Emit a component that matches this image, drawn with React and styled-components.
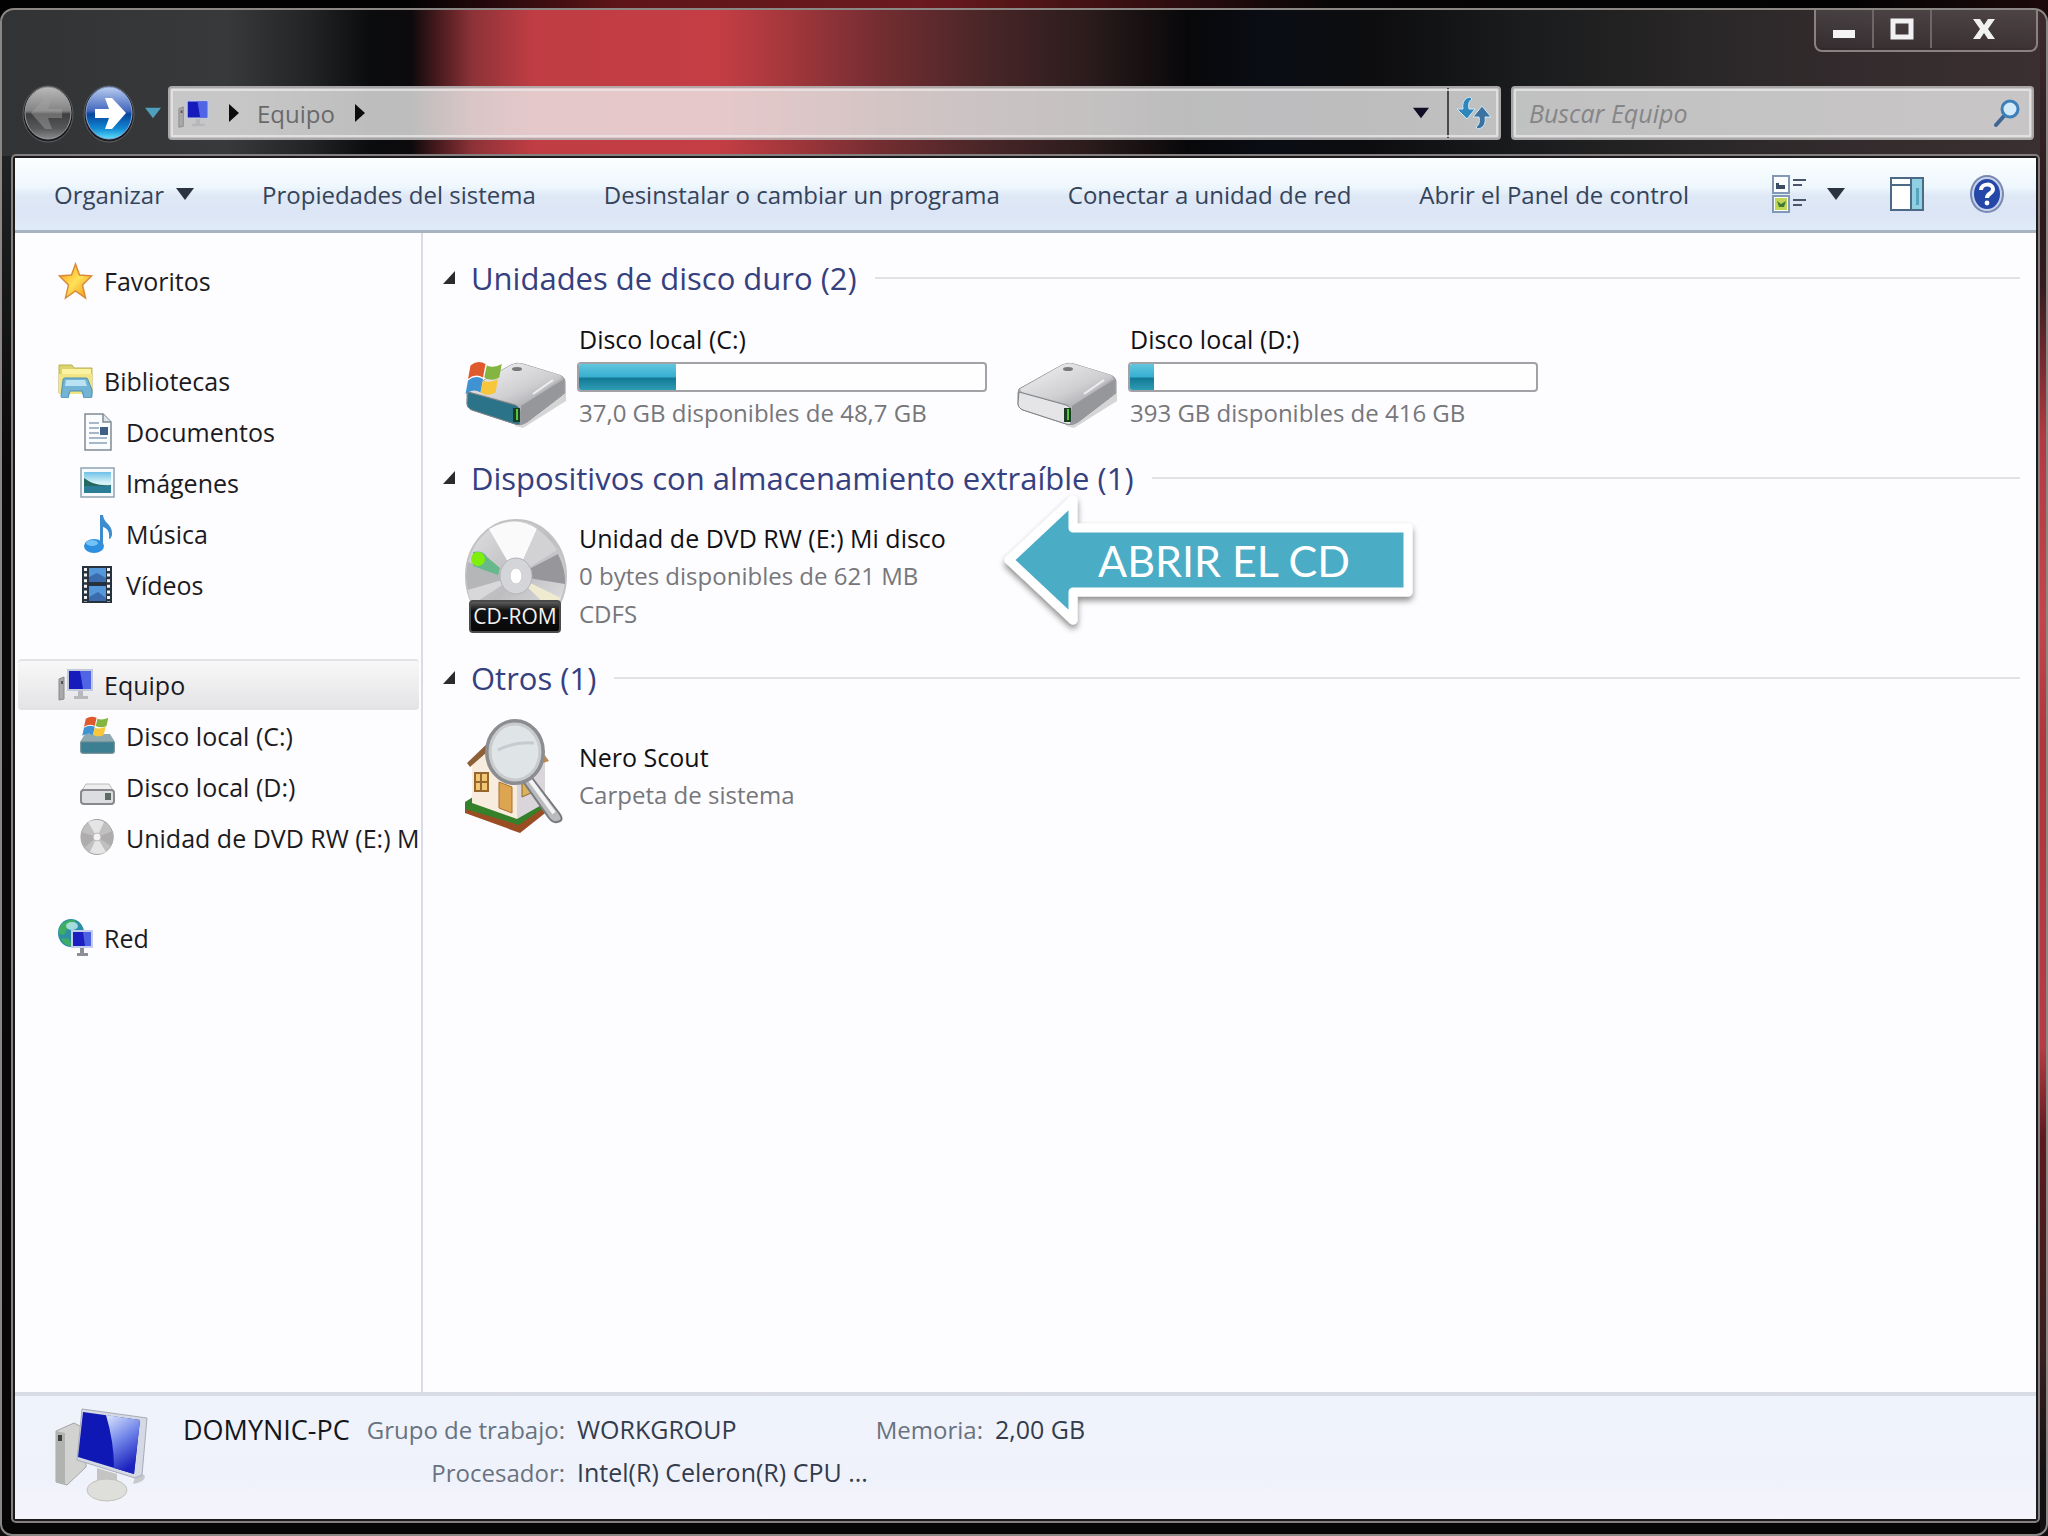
import React, { useState } from "react";
import styled, { createGlobalStyle } from "styled-components";

const FONT = '"Open Sans", "Noto Sans", sans-serif';
const TEXT = "#1b1b1f";
const MUTED = "#76777b";

const GlobalStyle = createGlobalStyle`
  * {
    box-sizing: border-box;
  }

  body {
    margin: 0;
    background: #050506;
    font-family: ${FONT};
    font-size: 24px;
    color: ${TEXT};
  }

  button, input {
    margin: 0;
    padding: 0;
    border: 0;
    background: none;
    color: inherit;
    font: inherit;
  }

  svg {
    display: block;
    flex: none;
  }
`;

const Desktop = styled.div`
  display: flex;
  min-height: 100vh;
  padding-top: 8px;
  background: linear-gradient(90deg, #020203 20%, #5d1418 30%, #6b1a1e 45%, #070506 65%, #020203 90%, #1c090b) top / 100% 20px no-repeat #111;
`;

const Window = styled.div`
  display: flex;
  flex: 1;
  flex-direction: column;
  min-width: 0;
  padding: 0 6px 11px 9px;
  border: 2px solid #8b8785;
  border-radius: 14px 14px 12px 12px;
  background:
    linear-gradient(180deg, #3b2a2e, #2c1a1d 14%, #351c1f 18%, #b33a41 28%, #c6444b 40%, #b0363b 48%, #b83b43 68%, #5d1a1e 74%, #3a1f20 88%, #121214 96%)
      right / 6px 100% no-repeat,
    linear-gradient(90deg, #323335 0%, #38393b 11%, #232426 15%, #0b0c0e 18%, #0c0a0c 20%, #3a1619 21%, #8c3237 23%, #c03d44 26%, #c43e44 35%, #a8383d 38%, #732d31 43%, #4a2628 48%, #2c1c1d 53%, #08080a 58%, #0a0d14 62%, #0d0d0f 67%, #191b1c 74%, #2b2829 84%, #352c2e 92%, #3a2f31 100%)
      top / 100% 146px no-repeat,
    linear-gradient(180deg, #2c2d2f, #0a0a0b 30%, #060607);
`;

const Caption = styled.header`
  display: flex;
  justify-content: flex-end;
  height: 74px;
  padding-right: 2px;
`;

const WindowControls = styled.div`
  display: flex;
  height: 42px;
  border: 2px solid #8a8180;
  border-top: 0;
  border-radius: 0 0 8px 8px;
`;

const WindowButton = styled.button`
  display: grid;
  place-items: center;
  width: ${({ $wide }) => ($wide ? "104px" : "58px")};
  height: 38px;
  border-right: ${({ $wide }) => ($wide ? "0" : "2px solid #6f6766")};
  background: linear-gradient(rgba(255, 255, 255, 0.1), rgba(255, 255, 255, 0.02));
`;

const NavBar = styled.nav`
  display: flex;
  align-items: center;
  height: 58px;
  margin-bottom: 12px;
  padding: 0 6px 0 11px;
`;

const NavButton = styled.button`
  margin-right: ${({ $gap }) => $gap}px;
`;

const fieldFrame = `
  display: flex;
  align-items: stretch;
  min-width: 0;
  height: 54px;
  border: 2px solid rgba(150, 146, 146, 0.6);
  border-radius: 4px;
  outline: 2px solid rgba(235, 232, 232, 0.75);
  outline-offset: -5px;
  background: rgba(240, 240, 240, 0.78);
`;

const AddressBar = styled.div`
  ${fieldFrame}
  flex: 1;
  margin-right: 10px;
  padding-left: 8px;
`;

const Crumb = styled.button`
  display: flex;
  align-items: center;
  gap: 20px;
  margin-right: 18px;
  color: #69696b;
`;

const AddressButton = styled.button`
  display: grid;
  place-items: center;
  width: 52px;
  margin-left: ${({ $push }) => ($push ? "auto" : "0")};
  border-left: ${({ $divided }) => ($divided ? "2px solid #4b4a4b" : "0")};
`;

const SearchBox = styled.label`
  ${fieldFrame}
  flex: 0 0 26%;
  align-items: center;
  padding: 0 10px 0 16px;
`;

const SearchInput = styled.input`
  flex: 1;
  min-width: 0;
  outline: 0;
  font-size: 25px;

  &::placeholder {
    color: #858587;
    font-style: italic;
    opacity: 1;
  }
`;

const Body = styled.div`
  display: flex;
  flex: 1;
  flex-direction: column;
  border: 2px solid rgba(190, 182, 182, 0.65);
  border-radius: 5px;
  padding: 2px;
  background: #1b1a1c;
`;

const Toolbar = styled.div`
  display: flex;
  align-items: center;
  gap: 68px;
  height: 75px;
  padding: 0 31px 0 39px;
  border-bottom: 3px solid #a9b2c0;
  background: linear-gradient(#fdfeff, #eef7fd 40%, #dfe9f6 52%, #dbe5f5 75%, #e0ebf8);
  color: #35435a;
`;

const ToolButton = styled.button`
  display: flex;
  align-items: center;
  gap: ${({ $gap = 12 }) => $gap}px;
  white-space: nowrap;
`;

const ToolIcons = styled.div`
  display: flex;
  align-items: center;
  gap: 44px;
  margin-left: auto;
`;

const Content = styled.div`
  display: flex;
  flex: 1;
  background: #fdfcfe;
`;

const Sidebar = styled.aside`
  width: 408px;
  flex: none;
  padding: 22px 2px 0 3px;
  border-right: 2px solid #d9dce4;
  font-size: 25px;
`;

const TreeGroup = styled.ul`
  margin: 0 0 49px;
  padding: 0;
  list-style: none;
`;

const TreeLink = styled.a`
  display: flex;
  align-items: center;
  gap: 11px;
  height: 51px;
  padding-left: ${({ $child }) => ($child ? "62px" : "40px")};
  overflow: hidden;
  border: 2px solid ${({ $selected }) => ($selected ? "#e2e2e4" : "transparent")};
  border-width: 2px 0;
  border-radius: 4px;
  background: ${({ $selected }) =>
    $selected ? "linear-gradient(#f8f8f9, #e4e4e6)" : "none"};
  color: inherit;
  text-decoration: none;
  white-space: nowrap;
`;

const Main = styled.main`
  flex: 1;
  min-width: 0;
  padding: 23px 16px 0 20px;
`;

const Section = styled.section`
  position: relative;
  margin-bottom: 4px;
`;

const SectionTitle = styled.h2`
  display: flex;
  align-items: center;
  height: 44px;
  margin: 0;
  color: #35407e;
  font-size: 31px;
  font-weight: 400;
  white-space: nowrap;

  &::after {
    content: "";
    flex: 1;
    height: 2px;
    margin-left: 18px;
    background: #e1e2e6;
  }
`;

const Collapse = styled.button`
  width: 14px;
  margin-right: 14px;
`;

const Tiles = styled.div`
  display: flex;
  flex-wrap: wrap;
  padding-left: 22px;
`;

const Tile = styled.div`
  display: flex;
  align-items: center;
  gap: 10px;
  width: 551px;
  height: 152px;
  white-space: nowrap;
`;

const TileText = styled.div`
  width: 410px;
  line-height: 38px;
`;

const TileLine = styled.div`
  padding-left: 2px;
  color: ${({ $muted }) => ($muted ? MUTED : "#111114")};
  font-size: ${({ $muted }) => ($muted ? "24px" : "25px")};
`;

const Meter = styled.div`
  height: 30px;
  margin: 4px 0 2px;
  border: 2px solid #a2a1a5;
  border-radius: 4px;
  background: #fefefe;
`;

const MeterFill = styled.div`
  height: 100%;
  border-radius: 2px 0 0 2px;
  background: linear-gradient(#62c6de, #37aed0 50%, #127893 54%, #2e9cb6);
`;

// Lies over the tiles and points at the drive
const Callout = styled.div`
  position: absolute;
  top: 36px;
  left: 554px;
`;

const CalloutText = styled.span`
  position: absolute;
  inset: 0 0 14px 24px;
  display: grid;
  place-items: center;
  color: #fff;
  font-family: Lato, sans-serif;
  font-size: 43px;
`;

const Details = styled.footer`
  display: flex;
  align-items: flex-start;
  height: 127px;
  padding: 12px 40px 0 38px;
  border-top: 4px solid #d9dce4;
  background: linear-gradient(#eff3fb, #f0f2fb 70%, #f5f4fc);
`;

const DetailsGrid = styled.div`
  display: grid;
  grid-template-columns: 170px 200px 285px 109px auto;
  column-gap: 12px;
  align-items: center;
  margin: 0 0 0 34px;
  line-height: 43px;
  white-space: nowrap;
`;

const DetailsLabel = styled.span`
  grid-column: ${({ $column }) => $column};
  color: #687280;
  text-align: right;
`;

const DetailsValue = styled.span`
  color: ${({ $strong }) => ($strong ? "#14161c" : "#333c4c")};
  font-size: ${({ $strong }) => ($strong ? "27px" : "25px")};
`;

const Caret = ({ color = "#2b3340", size = 18 }) => (
  <svg width={size} height="12" viewBox="0 0 18 12" aria-hidden="true">
    <path d="M0 0h18L9 12z" fill={color} />
  </svg>
);

const CrumbArrow = () => (
  <svg width="10" height="18" viewBox="0 0 10 18" aria-hidden="true">
    <path d="M0 0l10 9-10 9z" fill="#0d0d10" />
  </svg>
);

const RoundArrow = ({ active }) => {
  const id = active ? "forward" : "back";
  return (
    <svg width="52" height="60" viewBox="0 0 52 60" aria-hidden="true">
      <defs>
        <linearGradient id={id} x2="0" y2="1">
          <stop offset="0" stopColor={active ? "#b9cdf0" : "#b9b9b9"} />
          <stop offset=".46" stopColor={active ? "#4367bd" : "#848484"} />
          <stop offset=".52" stopColor={active ? "#07449b" : "#3f3f40"} />
          <stop offset=".8" stopColor={active ? "#1288d3" : "#57585a"} />
          <stop offset="1" stopColor={active ? "#5ce2fb" : "#8a8b8c"} />
        </linearGradient>
      </defs>
      <ellipse cx="26" cy="31" rx="25" ry="28" fill="#1a1c20" stroke="#5d6065" />
      <ellipse cx="26" cy="30" rx="23" ry="26" fill={`url(#${id})`} stroke={active ? "#8ba5d9" : "#9b9b9b"} />
      {active ? (
        <path d="M12 26h14l-4-11h7l14 15-14 16h-7l4-11H12z" fill="#fff" />
      ) : (
        <path d="M40 26H26l4-11h-7L9 30l14 16h7l-4-11h14z" fill="#a5a5a5" opacity=".45" />
      )}
    </svg>
  );
};

const PcSmall = ({ size = 35 }) => (
  <svg width={size} height={size} viewBox="0 0 35 35" aria-hidden="true">
    <path d="M1 12l5-2v22l-5 1z" fill="#a9a9ab" stroke="#8a8a8d" />
    <path d="M3 14h2v3H3z" fill="#555" />
    <path d="M9 2h26v22H9z" fill="#c3c9dd" />
    <path d="M11 4h22v18H11z" fill="#161bbb" />
    <path d="M22 4h11v18H25z" fill="#5064e6" />
    <path d="M20 24h5v5h5v3H16v-3h4z" fill="#b7b8bb" />
  </svg>
);

const RefreshIcon = () => (
  <svg width="36" height="34" viewBox="0 0 36 34" aria-hidden="true">
    <g fill="#2f86bd" stroke="#cfe9f7" strokeWidth="1">
      <path d="M14 1C8 2 6 7 7 13H1l10 10 8-10h-6c-1-5 0-8 3-10z" />
      <path d="M22 33c6-1 8-6 7-12h6L26 10l-9 11h6c1 5 0 8-3 10z" fill="#3d719f" />
    </g>
  </svg>
);

const SearchIcon = () => (
  <svg width="30" height="30" viewBox="0 0 30 30" aria-hidden="true">
    <path d="M12 18L4 27" stroke="#3f6693" strokeWidth="4" strokeLinecap="round" />
    <circle cx="18" cy="11" r="8" fill="#d3eaf8" stroke="#3d7fb8" strokeWidth="3" />
  </svg>
);

const ViewsIcon = () => (
  <svg width="35" height="40" viewBox="0 0 35 40" aria-hidden="true">
    <path d="M1 2h16v17H1zM1 22h16v16H1z" fill="#fbfdff" stroke="#8199b4" strokeWidth="2" />
    <path d="M4 13V9h3v2h6v4H4z" fill="#3b4c63" />
    <path d="M3 24h12v12H3z" fill="#c2d655" />
    <path d="M5 27l4 3 5-3-2 6H7z" fill="#3f7b35" />
    <path d="M21 6h13M21 11h9M21 26h13M21 31h9" stroke="#49566a" strokeWidth="2" />
  </svg>
);

const PreviewIcon = () => (
  <svg width="36" height="36" viewBox="0 0 36 36" aria-hidden="true">
    <path d="M2 2h32v32H2z" fill="#fff" stroke="#4c6a88" strokeWidth="2" />
    <path d="M22 3h11v30H22z" fill="#8fd0e3" />
    <path d="M2 9h20M22 2v32" stroke="#4c6a88" strokeWidth="2" />
    <path d="M27 12h3v17h-3z" fill="#5aa3bd" />
  </svg>
);

const HelpIcon = () => (
  <svg width="36" height="40" viewBox="0 0 36 40" aria-hidden="true">
    <ellipse cx="18" cy="20" rx="17" ry="19" fill="#7988b3" />
    <ellipse cx="18" cy="20" rx="14" ry="16" fill="#2447a8" stroke="#c7d2ec" strokeWidth="2" />
    <path d="M12 16c0-7 12-7 12-1 0 5-6 4-6 9" fill="none" stroke="#fff" strokeWidth="4" />
    <circle cx="18" cy="29" r="2.4" fill="#fff" />
  </svg>
);

const StarIcon = () => (
  <svg width="35" height="38" viewBox="0 0 35 38" aria-hidden="true">
    <defs>
      <linearGradient id="star" x2="1" y2="1">
        <stop offset=".2" stopColor="#ffb52c" />
        <stop offset=".5" stopColor="#ffe258" />
        <stop offset="1" stopColor="#f28c14" />
      </linearGradient>
    </defs>
    <path d="M17.500 2l4 11 12 1-9 9 3 13-10-7-10 7 3-13-9-9 12-1z" fill="url(#star)" stroke="#d98b35" strokeWidth="1.500" />
  </svg>
);

const LibraryIcon = () => (
  <svg width="35" height="35" viewBox="0 0 35 35" aria-hidden="true">
    <path d="M1 2h13l2 3h18v25H1z" fill="#dcd36a" stroke="#b9b257" />
    <path d="M4 6h29v5H4z" fill="#fbf3a2" />
    <path d="M1 11h33v20H1z" fill="#f2e585" />
    <path d="M5 17q0-2 2-2h21q2 0 2 2l4 10v6q0 2-2 2h-6l-2-7H12l-2 7H5q-2 0-2-2z" fill="#73b4d6" stroke="#4f8fae" />
    <path d="M8 17h19l2 6H7z" fill="#b9e2f3" />
  </svg>
);

const DocumentIcon = () => (
  <svg width="35" height="38" viewBox="0 0 35 38" aria-hidden="true">
    <path d="M5 1h18l8 8v28H5z" fill="#fbfcfe" stroke="#808a96" strokeWidth="1.500" />
    <path d="M23 1v8h8" fill="#dde4ec" stroke="#808a96" strokeWidth="1.500" />
    <path d="M9 10h10M9 15h10M9 20h10M9 25h18M9 30h18" stroke="#8ba0b8" strokeWidth="1.500" />
    <path d="M20 14h8v8h-8z" fill="#3f5f85" />
  </svg>
);

const PictureIcon = () => (
  <svg width="35" height="31" viewBox="0 0 35 31" aria-hidden="true">
    <defs>
      <linearGradient id="sky" x2="0" y2="1">
        <stop offset="0" stopColor="#6fc0e8" />
        <stop offset=".5" stopColor="#d5f3f6" />
      </linearGradient>
    </defs>
    <path d="M1 1h33v29H1z" fill="#f6fafc" stroke="#8ea3b3" strokeWidth="1.500" />
    <path d="M4 5h27v21H4z" fill="url(#sky)" />
    <path d="M4 11c7 5 14 8 27 7v3H4z" fill="#246a5f" />
    <path d="M4 19h27v7H4z" fill="#2b7c96" />
  </svg>
);

const MusicIcon = () => (
  <svg width="35" height="40" viewBox="0 0 35 40" aria-hidden="true">
    <ellipse cx="14" cy="32" rx="10" ry="7" fill="#2c8fe0" />
    <ellipse cx="12" cy="29" rx="6" ry="3" fill="#73c2f5" />
    <path d="M20 1h3c1 9 10 9 9 20-1 3-2 4-3 4 1-8-2-11-6-12v19h-3z" fill="#3d8cce" />
  </svg>
);

const FilmIcon = () => (
  <svg width="35" height="37" viewBox="0 0 35 37" aria-hidden="true">
    <path d="M2 0h30v37H2z" fill="#27323e" />
    <path d="M9 2h17v14H9zM9 20h17v15H9z" fill="#5598da" />
    <path d="M9 11l8-4 9 5v4H9zM9 31l9-5 8 6v3H9z" fill="#3a6cae" />
    <path d="M5.500 2v34M28.500 2v34" stroke="#f3f5f7" strokeWidth="3" strokeDasharray="3 2.600" />
  </svg>
);

const WindowsFlag = () => (
  <>
    <path d="M2 3q6-4 12-1l-2 9q-6-3-12 1z" fill="#e0592c" />
    <path d="M15 3q6 2 12-1l-2 9q-6 3-12 0z" fill="#84b540" />
    <path d="M0 13q6-4 12-1l-2 9q-6-3-12 1z" fill="#3f93d3" />
    <path d="M12 13q6 2 12-1l-2 9q-6 3-12 0z" fill="#f8c63a" />
  </>
);

const DriveSmallC = () => (
  <svg width="35" height="39" viewBox="0 0 35 39" aria-hidden="true">
    <path d="M5 18h25l5 8v9q0 3-3 3H3q-3 0-3-3v-9z" fill="#8fa9b1" />
    <path d="M1 26h33v9q0 2-2 2H3q-2 0-2-2z" fill="#3d7f92" stroke="#66858e" />
    <g transform="translate(4 0) scale(.9)">
      <WindowsFlag />
    </g>
  </svg>
);

const DriveSmallD = () => (
  <svg width="35" height="38" viewBox="0 0 35 38" aria-hidden="true">
    <path d="M6 16h23l5 8H1z" fill="#eeeeef" stroke="#bcbcbf" />
    <rect x="1" y="22" width="33" height="14" rx="3" fill="#dcdde0" stroke="#88898c" strokeWidth="2" />
    <path d="M25 25h6v7h-6z" fill="#5e6a63" />
  </svg>
);

const DiscSmall = () => (
  <svg width="35" height="38" viewBox="0 0 35 38" aria-hidden="true">
    <ellipse cx="17" cy="18" rx="16" ry="17.500" fill="#c1c0c0" stroke="#a3a2a2" />
    <path d="M17 18L8 3q9-4 16 0zM17 18l9 15q-9 4-16 0z" fill="#e6e5e5" />
    <path d="M17 18L1 13q0 9 4 15zM17 18l16-6q2 9-2 15z" fill="#aeacac" />
    <circle cx="17" cy="18" r="4" fill="#f4f4f4" stroke="#bbb" />
  </svg>
);

const NetworkIcon = () => (
  <svg width="35" height="40" viewBox="0 0 35 40" aria-hidden="true">
    <ellipse cx="13" cy="15" rx="13" ry="14" fill="#2c8fa3" />
    <path d="M4 6q7-6 14-3l-3 7-6 1-3 6-5-1q-1-5 3-10zM3 20l8 1 3 7q-8 0-11-8z" fill="#3fae63" />
    <ellipse cx="14" cy="8" rx="6" ry="4" fill="#bfeaf3" opacity=".8" />
    <path d="M13 12h22v18H13z" fill="#c6cdec" />
    <path d="M15 14h18v14H15z" fill="#1c1fc0" />
    <path d="M25 14h8v14h-6z" fill="#4c61e2" />
    <path d="M22 30h4v5h4v3H19v-3h3z" fill="#8d8f96" />
  </svg>
);

const DriveLarge = ({ system }) => {
  const id = system ? "drive-c" : "drive-d";
  return (
    <svg width="102" height="116" viewBox="0 0 102 116" aria-hidden="true">
      <defs>
        <linearGradient id={id} x2="1" y2="1">
          <stop offset="0" stopColor="#f4f4f5" />
          <stop offset=".6" stopColor="#cfcfd2" />
          <stop offset="1" stopColor="#9c9da1" />
        </linearGradient>
      </defs>
      <path d="M50 108L101 75v8L58 110z" fill="#bbb" opacity=".6" />
      <path d="M3 71L46 47q6-3 12-1l36 11q6 2 6 7v11L62 104q-5 4-12 2L7 92q-5-2-5-7V75z" fill="#b3b4b7" stroke="#8c8d90" />
      <path d="M4 71L46 47q6-3 12-1l37 11q3 2 0 4L58 86q-3 1-7 0L6 74z" fill={`url(#${id})`} />
      <path d="M56 88l43-27v14L62 104q-3 2-6 2z" fill="#96979b" />
      <path d="M3 74l47 13q5 2 5 7v12q-2 1-5 0L7 92q-5-2-5-7z" fill={system ? "#2b7389" : "#e5e5e8"} stroke="#7d8387" />
      <path d="M48 90h7v14h-7z" fill="#1b3d22" />
      <path d="M51 91h2v11h-2z" fill="#53c541" />
      <ellipse cx="52" cy="51" rx="5" ry="2" fill="#77787b" />
      <path d="M68 76L88 62" stroke="#efeff0" strokeWidth="2" />
      {system && (
        <g transform="translate(3 43) scale(1.250 1.500)">
          <WindowsFlag />
        </g>
      )}
    </svg>
  );
};

const CdLabel = styled.span`
  position: absolute;
  right: 6px;
  bottom: 1px;
  left: 4px;
  height: 33px;
  border: 2px solid #4a4a4b;
  border-radius: 4px;
  background: linear-gradient(#5c5c5d, #111 30%, #080808);
  color: #f2f2f2;
  font-size: 21px;
  line-height: 29px;
  text-align: center;
`;

const CdBox = styled.div`
  position: relative;
`;

const DiscLarge = () => (
  <CdBox>
    <svg width="102" height="116" viewBox="0 0 102 116" aria-hidden="true">
      <defs>
        <linearGradient id="disc" x2="1" y2="1">
          <stop offset="0" stopColor="#e3e3e5" />
          <stop offset=".5" stopColor="#bdbdc0" />
          <stop offset="1" stopColor="#e8e8ea" />
        </linearGradient>
      </defs>
      <ellipse cx="51" cy="58" rx="50" ry="56" fill="url(#disc)" stroke="#c2c2c5" strokeWidth="2" />
      <path d="M51 58L24 11q27-15 48 0z" fill="#fafafa" />
      <path d="M51 58L72 11q12 8 20 21z" fill="#d2d2d5" />
      <path d="M51 58l42-22q8 16 7 30z" fill="#97979b" />
      <path d="M51 58L3 44q-3 15 0 28z" fill="#b5b6b8" />
      <path d="M51 58L8 86q-5-8-5-14z" fill="#d8d8da" />
      <path d="M51 58l37 36 8-14z" fill="#f0ebd0" />
      <path d="M8 34q10-2 14 5l13 11-2 7-25-9z" fill="#67b98b" />
      <ellipse cx="13" cy="41" rx="7" ry="7" fill="#7fee0b" />
      <ellipse cx="51" cy="58" rx="16" ry="18" fill="#d4d5d8" stroke="#b4b4b8" />
      <ellipse cx="51" cy="58" rx="6" ry="8" fill="#fff" stroke="#ccc" />
    </svg>
    <CdLabel>CD-ROM</CdLabel>
  </CdBox>
);

const ScoutIcon = () => (
  <svg width="102" height="116" viewBox="0 0 102 116" aria-hidden="true">
    <path d="M0 86l54 19 30-22v9l-29 23L0 95z" fill="#9a4d22" />
    <path d="M0 84l8-5 77 2v4l-31 22L0 91z" fill="#35802a" />
    <path d="M7 44L30 20l22 28v53L7 85z" fill="#f7ecdd" />
    <path d="M52 48l28-6v43l-28 16z" fill="#d9d5da" />
    <path d="M2 45L26 22l4 5L5 49z" fill="#8e6038" />
    <path d="M30 22L60 10l24 33-6 2-20-5-24-15z" fill="#b98a55" />
    <path d="M10 55h13v18H10z" fill="#f1c775" stroke="#96672c" strokeWidth="2" />
    <path d="M16 55v18M10 64h13" stroke="#96672c" strokeWidth="2" />
    <path d="M34 64l13 5v26l-13-5z" fill="#dda452" stroke="#a8712c" />
    <path d="M57 66l9-3v12l-9 4z" fill="#d9b25e" stroke="#96672c" />
    <path d="M64 56l30 39q6 8-2 9-4 1-8-4L57 62z" fill="#b9bbbe" stroke="#77797c" strokeWidth="2" />
    <path d="M65 62l24 33" stroke="#f4f4f5" strokeWidth="4" />
    <ellipse cx="50" cy="34" rx="28" ry="31" fill="#dfe4e6" stroke="#8b8d90" strokeWidth="4" />
    <ellipse cx="50" cy="34" rx="25" ry="28" fill="none" stroke="#c8cacc" strokeWidth="3" />
    <path d="M33 32q18-9 36-7" stroke="#c4cccf" strokeWidth="3" fill="none" />
  </svg>
);

// Screen turned slightly to the left, tower behind it
const ComputerLarge = () => (
  <svg width="96" height="96" viewBox="0 0 96 96" aria-hidden="true">
    <defs>
      <linearGradient id="screen" x2=".4" y2="1">
        <stop offset="0" stopColor="#dfe7fb" />
        <stop offset=".5" stopColor="#7287ea" />
        <stop offset="1" stopColor="#1b22bd" />
      </linearGradient>
    </defs>
    <path d="M3 23l18-8 12 6v38L14 77 3 74z" fill="#d2d3d0" stroke="#a6a7a4" />
    <path d="M3 23l9 2v51l-9-2z" fill="#b1b3b0" />
    <path d="M5 27h4v6H5z" fill="#3d3f3e" />
    <path d="M80 76q12-2 12-8l-8-6z" fill="#c8c9cc" />
    <path d="M44 60l20 6v14H44z" fill="#c4c5c3" />
    <ellipse cx="54" cy="82" rx="20" ry="11" fill="#dedfdb" stroke="#c1c2be" />
    <path d="M29 1l65 9-5 57-7 3-58-18z" fill="#d5d9e4" stroke="#a8acb8" />
    <path d="M30 4l57 8-6 54-56-17z" fill="#0f18b5" />
    <path d="M53 7l34 5-6 54-20-6q0-26-8-53z" fill="url(#screen)" />
  </svg>
);

const ArrowShape = () => (
  <svg width="430" height="150" viewBox="0 0 430 150" aria-hidden="true">
    <defs>
      <filter id="arrow-shadow" x="-5%" y="-5%" width="110%" height="120%">
        <feDropShadow dx="0" dy="4" stdDeviation="3" floodOpacity=".45" />
      </filter>
    </defs>
    <path
      d="M12 68L76 8v28h335v64H76v28z"
      fill="#4bacc6"
      stroke="#fff"
      strokeWidth="9"
      strokeLinejoin="round"
      filter="url(#arrow-shadow)"
    />
  </svg>
);

const TREE = [
  [{ label: "Favoritos", Icon: StarIcon }],
  [
    { label: "Bibliotecas", Icon: LibraryIcon },
    { label: "Documentos", Icon: DocumentIcon, child: true },
    { label: "Imágenes", Icon: PictureIcon, child: true },
    { label: "Música", Icon: MusicIcon, child: true },
    { label: "Vídeos", Icon: FilmIcon, child: true }
  ],
  [
    { label: "Equipo", Icon: PcSmall },
    { label: "Disco local (C:)", Icon: DriveSmallC, child: true },
    { label: "Disco local (D:)", Icon: DriveSmallD, child: true },
    { label: "Unidad de DVD RW (E:) M", Icon: DiscSmall, child: true }
  ],
  [{ label: "Red", Icon: NetworkIcon }]
];

const COMMANDS = [
  "Propiedades del sistema",
  "Desinstalar o cambiar un programa",
  "Conectar a unidad de red",
  "Abrir el Panel de control"
];

const Group = ({ title, children, extra }) => {
  const [open, setOpen] = useState(true);

  return (
    <Section>
      <SectionTitle>
        <Collapse aria-label={title} aria-expanded={open} onClick={() => setOpen(!open)}>
          <svg width="13" height="14" viewBox="0 0 13 14" aria-hidden="true">
            <path d="M12 0v13H0z" fill="#2b2b2e" />
          </svg>
        </Collapse>
        {title}
      </SectionTitle>
      {open && <Tiles>{children}</Tiles>}
      {open && extra}
    </Section>
  );
};

const Drive = ({ icon, name, used, lines }) => (
  <Tile>
    {icon}
    <TileText>
      <TileLine>{name}</TileLine>
      {used !== undefined && (
        <Meter>
          <MeterFill style={{ width: `${used}%` }} />
        </Meter>
      )}
      {lines.map(line => (
        <TileLine key={line} $muted>
          {line}
        </TileLine>
      ))}
    </TileText>
  </Tile>
);

const App = () => {
  const [selected, setSelected] = useState("Equipo");
  const [query, setQuery] = useState("");

  return (
    <>
      <GlobalStyle />
      <Desktop>
        <Window>
          <Caption>
            <WindowControls>
              <WindowButton aria-label="Minimizar">
                <svg width="24" height="24" viewBox="0 0 24 24" aria-hidden="true">
                  <path d="M1 13h22v8H1z" fill="#f4f4f4" />
                </svg>
              </WindowButton>
              <WindowButton aria-label="Maximizar">
                <svg width="24" height="22" viewBox="0 0 24 22" aria-hidden="true">
                  <path d="M3 3h18v16H3z" fill="none" stroke="#f1f1f4" strokeWidth="5" />
                </svg>
              </WindowButton>
              <WindowButton $wide aria-label="Cerrar">
                <svg width="22" height="20" viewBox="0 0 22 20" aria-hidden="true">
                  <path d="M0 0h7l4 6 4-6h7l-7 10 7 10h-7l-4-6-4 6H0l7-10z" fill="#f1f1f1" />
                </svg>
              </WindowButton>
            </WindowControls>
          </Caption>

          <NavBar>
            <NavButton $gap={9} aria-label="Atrás">
              <RoundArrow />
            </NavButton>
            <NavButton $gap={10} aria-label="Adelante">
              <RoundArrow active />
            </NavButton>
            <NavButton $gap={7} aria-label="Páginas recientes">
              <Caret color="#4e9fbe" size={16} />
            </NavButton>
            <AddressBar>
              <Crumb aria-label="Raíz">
                <PcSmall size={31} />
                <CrumbArrow />
              </Crumb>
              <Crumb>
                Equipo
                <CrumbArrow />
              </Crumb>
              <AddressButton $push aria-label="Ubicaciones anteriores">
                <Caret color="#120d24" size={16} />
              </AddressButton>
              <AddressButton $divided aria-label="Actualizar">
                <RefreshIcon />
              </AddressButton>
            </AddressBar>
            <SearchBox>
              <SearchInput
                type="text"
                aria-label="Buscar"
                placeholder="Buscar Equipo"
                value={query}
                onChange={event => setQuery(event.target.value)}
              />
              <SearchIcon />
            </SearchBox>
          </NavBar>

          <Body>
            <Toolbar>
              <ToolButton>
                Organizar
                <Caret />
              </ToolButton>
              {COMMANDS.map(command => (
                <ToolButton key={command}>{command}</ToolButton>
              ))}
              <ToolIcons>
                <ToolButton $gap={20} aria-label="Cambiar la vista">
                  <ViewsIcon />
                  <Caret />
                </ToolButton>
                <ToolButton aria-label="Panel de vista previa">
                  <PreviewIcon />
                </ToolButton>
                <ToolButton aria-label="Ayuda">
                  <HelpIcon />
                </ToolButton>
              </ToolIcons>
            </Toolbar>

            <Content>
              <Sidebar>
                {TREE.map(group => (
                  <TreeGroup key={group[0].label}>
                    {group.map(({ label, Icon, child }) => (
                      <li key={label}>
                        <TreeLink
                          href="#"
                          $child={child}
                          $selected={selected === label}
                          onClick={() => setSelected(label)}
                        >
                          <Icon />
                          {label}
                        </TreeLink>
                      </li>
                    ))}
                  </TreeGroup>
                ))}
              </Sidebar>

              <Main>
                <Group title="Unidades de disco duro (2)">
                  <Drive
                    icon={<DriveLarge system />}
                    name="Disco local (C:)"
                    used={24}
                    lines={["37,0 GB disponibles de 48,7 GB"]}
                  />
                  <Drive
                    icon={<DriveLarge />}
                    name="Disco local (D:)"
                    used={6}
                    lines={["393 GB disponibles de 416 GB"]}
                  />
                </Group>

                <Group
                  title="Dispositivos con almacenamiento extraíble (1)"
                  extra={
                    <Callout>
                      <ArrowShape />
                      <CalloutText>ABRIR EL CD</CalloutText>
                    </Callout>
                  }
                >
                  <Drive
                    icon={<DiscLarge />}
                    name="Unidad de DVD RW (E:) Mi disco"
                    lines={["0 bytes disponibles de 621 MB", "CDFS"]}
                  />
                </Group>

                <Group title="Otros (1)">
                  <Drive icon={<ScoutIcon />} name="Nero Scout" lines={["Carpeta de sistema"]} />
                </Group>
              </Main>
            </Content>

            <Details>
              <ComputerLarge />
              <DetailsGrid>
                <DetailsValue $strong>DOMYNIC-PC</DetailsValue>
                <DetailsLabel $column={2}>Grupo de trabajo:</DetailsLabel>
                <DetailsValue>WORKGROUP</DetailsValue>
                <DetailsLabel $column={4}>Memoria:</DetailsLabel>
                <DetailsValue>2,00 GB</DetailsValue>
                <DetailsLabel $column={2}>Procesador:</DetailsLabel>
                <DetailsValue>Intel(R) Celeron(R) CPU ...</DetailsValue>
              </DetailsGrid>
            </Details>
          </Body>
        </Window>
      </Desktop>
    </>
  );
};

export default App;
